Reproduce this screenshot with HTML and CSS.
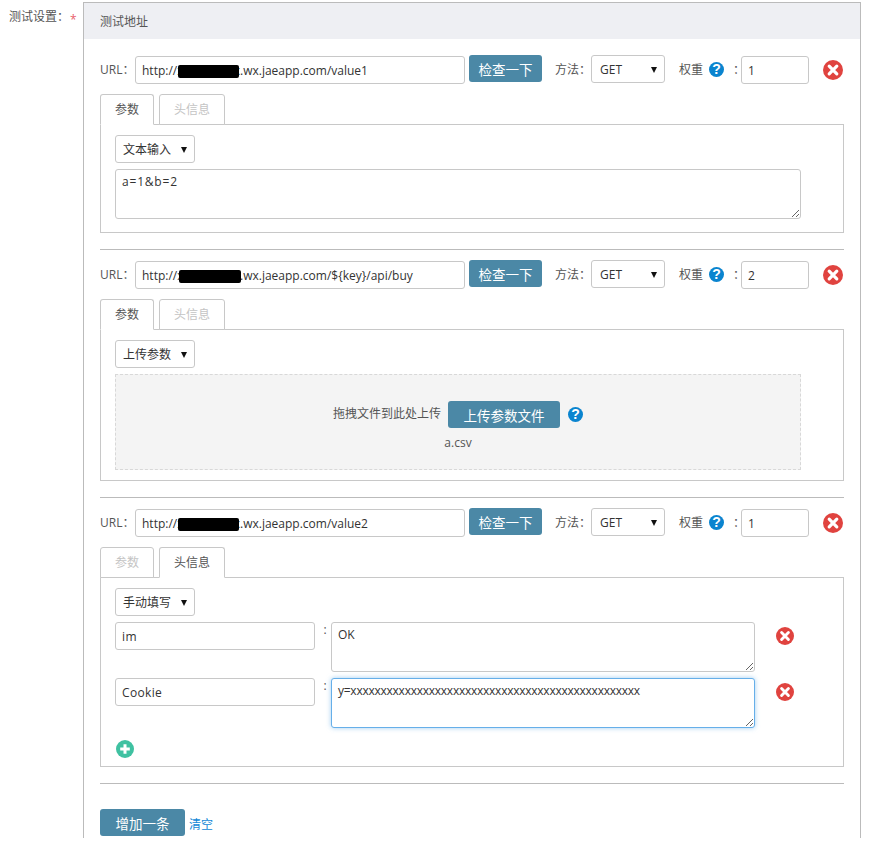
FILE: index.html
```html
<!DOCTYPE html>
<html lang="zh">
<head>
<meta charset="utf-8">
<title>测试设置</title>
<link rel="stylesheet" href="styles.css">
</head>
<body>
<svg class="defs" width="0" height="0" aria-hidden="true">
  <symbol id="del" viewBox="0 0 20 20">
    <circle cx="10" cy="10" r="10" fill="#e0433f"/>
    <path d="M6.2 6.2 13.8 13.8M13.8 6.2 6.2 13.8" stroke="#fff" stroke-width="3.2" stroke-linecap="round"/>
  </symbol>
  <symbol id="add" viewBox="0 0 18 18">
    <circle cx="9" cy="9" r="9" fill="#3fc1a1"/>
    <path d="M9 4.2V13.8M4.2 9H13.8" stroke="#fff" stroke-width="3"/>
  </symbol>
</svg>
<div class="page">
  <div class="field-label">测试设置：<span class="req">*</span></div>
  <section class="panel">
    <h2 class="panel-head">测试地址</h2>
    <div class="panel-body">

      <div class="entry">
        <div class="row">
          <label class="l-url">URL：</label>
          <input class="input url" value="http://xxxxxxxxxx.wx.jaeapp.com/value1">
          <i class="mask m1"></i>
          <button class="btn check">检查一下</button>
          <label class="l-method">方法：</label>
          <select class="select method"><option>GET</option></select>
          <label class="l-weight">权重</label>
          <span class="help">?</span>
          <span class="colon">：</span>
          <input class="input weight" value="1">
          <svg class="del-big"><use href="#del"/></svg>
        </div>
        <div class="tabs">
          <div class="tab t1 active">参数</div>
          <div class="tab t2">头信息</div>
        </div>
        <div class="tab-panel">
          <select class="select mode"><option>文本输入</option></select>
          <textarea class="area wide">a=1&amp;b=2</textarea>
        </div>
      </div>

      <hr class="rule">

      <div class="entry">
        <div class="row">
          <label class="l-url">URL：</label>
          <input class="input url" value="http://xxxxxxxxxx.wx.jaeapp.com/${key}/api/buy">
          <i class="mask m2"></i>
          <button class="btn check">检查一下</button>
          <label class="l-method">方法：</label>
          <select class="select method"><option>GET</option></select>
          <label class="l-weight">权重</label>
          <span class="help">?</span>
          <span class="colon">：</span>
          <input class="input weight" value="2">
          <svg class="del-big"><use href="#del"/></svg>
        </div>
        <div class="tabs">
          <div class="tab t1 active">参数</div>
          <div class="tab t2">头信息</div>
        </div>
        <div class="tab-panel short">
          <select class="select mode"><option>上传参数</option></select>
          <div class="drop">
            <div class="drop-line">
              <span>拖拽文件到此处上传</span>
              <button class="btn upload">上传参数文件</button>
              <span class="help">?</span>
            </div>
            <div class="file">a.csv</div>
          </div>
        </div>
      </div>

      <hr class="rule">

      <div class="entry">
        <div class="row">
          <label class="l-url">URL：</label>
          <input class="input url" value="http://xxxxxxxxxx.wx.jaeapp.com/value2">
          <i class="mask m1"></i>
          <button class="btn check">检查一下</button>
          <label class="l-method">方法：</label>
          <select class="select method"><option>GET</option></select>
          <label class="l-weight">权重</label>
          <span class="help">?</span>
          <span class="colon">：</span>
          <input class="input weight" value="1">
          <svg class="del-big"><use href="#del"/></svg>
        </div>
        <div class="tabs">
          <div class="tab t1">参数</div>
          <div class="tab t2 active">头信息</div>
        </div>
        <div class="tab-panel short">
          <select class="select mode"><option>手动填写</option></select>
          <div class="kv">
            <input class="input key" value="im">
            <span class="kv-colon">:</span>
            <textarea class="area val">OK</textarea>
            <svg class="del-small"><use href="#del"/></svg>
          </div>
          <div class="kv">
            <input class="input key" value="Cookie">
            <span class="kv-colon">:</span>
            <textarea class="area val focus">y=xxxxxxxxxxxxxxxxxxxxxxxxxxxxxxxxxxxxxxxxxxxxxxxx</textarea>
            <svg class="del-small"><use href="#del"/></svg>
          </div>
          <svg class="add"><use href="#add"/></svg>
        </div>
      </div>

      <hr class="rule last">

      <div class="actions">
        <button class="btn more">增加一条</button>
        <a class="clear">清空</a>
      </div>
    </div>
  </section>
</div>
</body>
</html>
```
FILE: styles.css
```css
* { box-sizing: border-box; }
html, body { margin: 0; background: #fff; }
body {
  font: 12px/1.4 "Open Sans", "Noto Sans CJK SC", sans-serif;
  color: #555;
}
.defs { position: absolute; }
.page { display: flex; align-items: flex-start; padding-top: 2px; }
.field-label { width: 83px; padding: 7px 0 0 9px; color: #555; white-space: nowrap; }
.req { color: #e8606b; margin-left: 1px; vertical-align: -3px; line-height: 1; }

.panel {
  width: 778px;
  height: 836px;
  border: 1px solid #bbb;
  border-bottom: 0;
}
.panel-head {
  margin: 0;
  height: 36px;
  padding-left: 16px;
  background: #eeeff3;
  font-size: 12px;
  font-weight: 400;
  line-height: 38px;
  color: #555;
}
.panel-body { padding: 16px 16px 0; }

.entry { position: relative; }
.row { display: flex; align-items: flex-start; height: 28px; }
.row label, .colon { line-height: 30px; white-space: nowrap; }
.l-url { width: 35px; }
.l-method { width: 36px; margin-left: 13px; }
.l-weight { width: 24px; margin-left: 14px; }
.colon { width: 8px; margin-left: 9px; color: #555; }

.input, .area, .select {
  font: 12px "Open Sans", "Noto Sans CJK SC", sans-serif;
  color: #333;
  background: #fff;
  border: 1px solid #c8c8c8;
  border-radius: 3px;
  outline: 0;
}
.input { height: 28px; padding: 0 6px; }
.url { width: 330px; margin-top: 1px; }
.key { letter-spacing: .35px; }
.weight { width: 68px; margin-top: 1px; }
.select {
  appearance: none;
  height: 28px;
  padding: 0 14px 0 7px;
  background: #fff url("data:image/svg+xml,%3Csvg xmlns='http://www.w3.org/2000/svg' width='6' height='6'%3E%3Cpath d='M0 0H6L3 6Z' fill='%23111'/%3E%3C/svg%3E") no-repeat right 7px top 11px;
}
.method { width: 74px; padding-left: 8px; }
.mode { width: 80px; display: block; }

.mask { position: absolute; left: 78px; top: 10px; width: 61px; height: 13px; background: #000; border-radius: 2px; }
.mask.m2 { left: 79px; width: 62px; }

.btn {
  border: 0;
  border-radius: 3px;
  background: #4b88a6;
  color: #fff;
  font: 13.5px "Open Sans", "Noto Sans CJK SC", sans-serif;
  height: 27px;
  padding: 0;
}
.check { width: 73px; margin-left: 4px; }
.upload { width: 112px; margin: 0 8px 0 7px; }
.more { width: 85px; }

.help {
  flex: none;
  display: inline-block;
  width: 15px;
  height: 15px;
  margin: 7px 0 0 6px;
  border-radius: 50%;
  background: #0a84cf;
  color: #fff;
  font: 700 14px/15px "Liberation Sans", sans-serif;
  text-align: center;
}
.del-big { flex: none; width: 20px; height: 20px; margin: 5px 0 0 14px; }

.tabs { display: flex; gap: 5px; margin: 11px 0 -1px; height: 31px; }
.tab {
  height: 31px;
  border: 1px solid #c8c8c8;
  border-radius: 3px 3px 0 0;
  background: #fff;
  color: #c4c4c4;
  text-align: center;
  line-height: 30px;
}
.tab.active { color: #555; border-bottom-color: #fff; z-index: 1; }
.t1 { width: 54px; }
.t2 { width: 66px; }

.tab-panel {
  border: 1px solid #c8c8c8;
  padding: 10px 42px 13px 14px;
}
.tab-panel.short { padding-bottom: 10px; }
.area {
  display: block;
  padding: 3px 6px;
  line-height: 17px;
  height: 50px;
  resize: both;
}
.wide { width: 686px; margin-top: 6px; letter-spacing: .8px; }

.drop {
  margin-top: 6px;
  height: 96px;
  width: 686px;
  background: #f4f4f4;
  border: 1px dashed #d8d8d8;
  text-align: center;
  padding-top: 26px;
}
.drop-line { display: flex; justify-content: center; align-items: center; height: 27px; }
.drop-line .help { margin: 0; }
.file { margin-top: 6px; line-height: 17px; }

.kv { display: flex; align-items: flex-start; margin-top: 6px; height: 50px; }
.key { width: 200px; }
.kv-colon { width: 16px; padding-left: 4px; text-align: center; line-height: 16px; color: #555; }
.val { width: 424px; }
.focus { border-color: #66afe9; box-shadow: 0 0 5px rgba(102, 175, 233, .6); letter-spacing: -.25px; }
.del-small { flex: none; width: 18px; height: 18px; margin: 5px 0 0 21px; }
.add { display: block; width: 18px; height: 18px; margin: 12px 0 -2px 1px; }

.rule { height: 1px; margin: 16px 0 10px; border: 0; background: #bbb; }
.rule.last { margin-bottom: 25px; }
.actions { display: flex; align-items: center; gap: 4px; }
.clear { color: #1287d6; padding-top: 6px; }
```
